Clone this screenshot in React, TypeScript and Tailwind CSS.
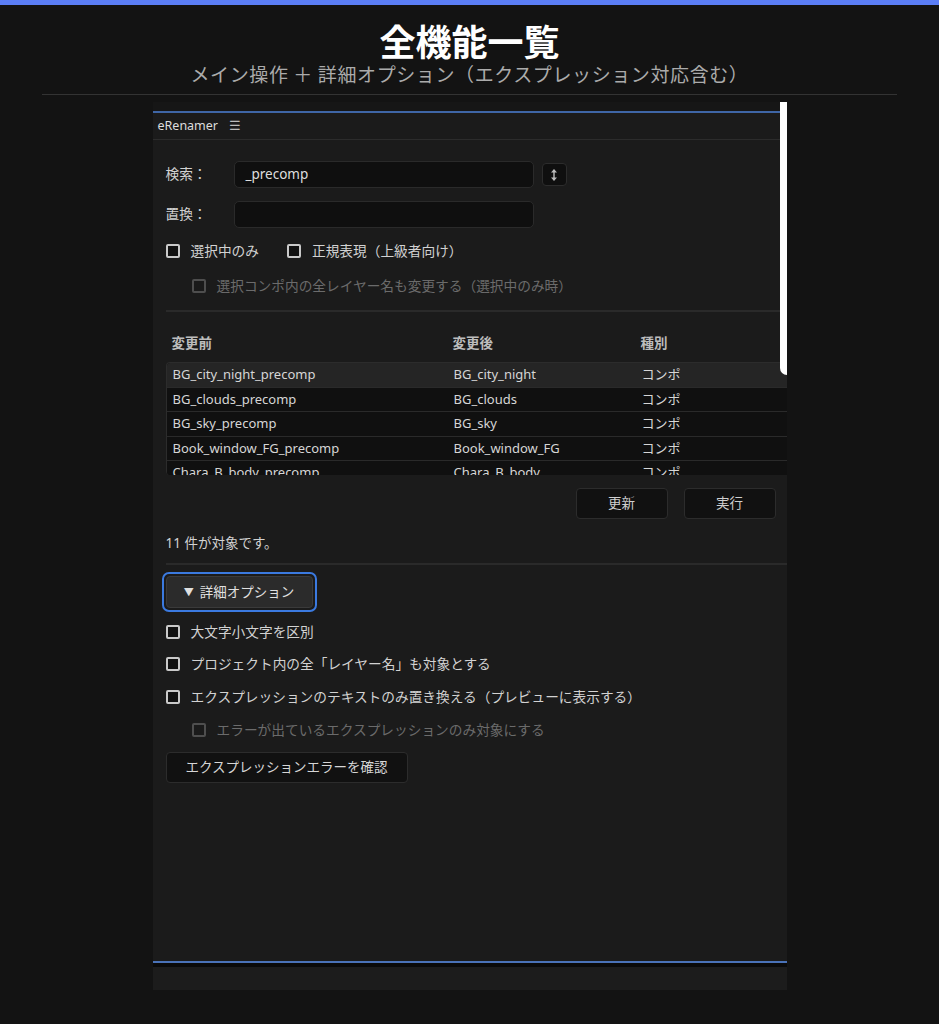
import React from "react";

const font = { fontFamily: '"Noto Sans", "Noto Sans CJK JP", sans-serif' };

function Box({ disabled }: { disabled?: boolean }) {
  return (
    <span
      className={
        "inline-block w-[14px] h-[14px] rounded-[2px] border-2 shrink-0 " +
        (disabled ? "border-[#4e4e4e] bg-[#1a1a1a]" : "border-[#c9c9c9] bg-[#111111]")
      }
    />
  );
}

function Check({ label, disabled, className }: { label: string; disabled?: boolean; className?: string }) {
  return (
    <div className={"flex items-center h-[20px] " + (className ?? "")}>
      <Box disabled={disabled} />
      <span className={"ml-[11px] text-[13.7px] " + (disabled ? "text-[#6b6b6b]" : "text-[#d2d2d2]")}>{label}</span>
    </div>
  );
}

const rows = [
  ["BG_city_night_precomp", "BG_city_night", "コンポ"],
  ["BG_clouds_precomp", "BG_clouds", "コンポ"],
  ["BG_sky_precomp", "BG_sky", "コンポ"],
  ["Book_window_FG_precomp", "Book_window_FG", "コンポ"],
  ["Chara_B_body_precomp", "Chara_B_body", "コンポ"],
];

export default function App() {
  return (
    <div className="min-h-[1024px] bg-[#131313] flex flex-col" style={font}>
      <div className="h-[5px] bg-[#5b7ef6]" />
      <div className="mt-[16px] h-[38px] leading-[38px] text-center text-white text-[36px] font-bold" style={{ fontFamily: '"Noto Sans CJK JP", sans-serif' }}>
        全機能一覧
      </div>
      <div className="mt-[3px] h-[24px] leading-[24px] text-center text-[#ababab] text-[19px] tracking-[0.6px]" style={{ fontFamily: '"Noto Sans CJK JP", sans-serif' }}>
        メイン操作 ＋ 詳細オプション（エクスプレッション対応含む）
      </div>
      <div className="mt-[8px] mx-auto w-[855px] h-px bg-[#333333]" />

      <div className="relative mt-[7px] mx-auto w-[634px] h-[888px] bg-[#1b1b1b] flex flex-col overflow-hidden">
        <div className="h-[9px] bg-[#161616]" />
        <div className="h-[2px] bg-[#3f66a6]" />
        <div className="h-[27px] flex items-center px-[5px] border-b border-[#2c2c2c]">
          <span className="text-[12.5px] text-[#dddddd]">eRenamer</span>
          <span className="ml-[11px] text-[13px] text-[#bbbbbb]">☰</span>
        </div>

        <div className="flex-1 flex flex-col pl-[13px] pt-[21px]">
          <div className="flex items-center h-[27px]">
            <span className="w-[68px] text-[13.7px] text-[#d2d2d2]">検索：</span>
            <div className="w-[300px] h-[27px] rounded-[5px] bg-[#0f0f0f] border border-[#2a2a2a] flex items-center pl-[11px] text-[13.5px] text-[#dedede]">
              _precomp
            </div>
            <div className="ml-[8px] w-[25px] h-[23px] rounded-[4px] bg-[#0f0f0f] border border-[#2c2c2c] flex items-center justify-center">
              <svg width="8" height="12" viewBox="0 0 8 12" fill="#bdbdbd">
                <path d="M4 0 L7 3.5 H1 Z" />
                <rect x="3.3" y="3" width="1.4" height="6" />
                <path d="M4 12 L7 8.5 H1 Z" />
              </svg>
            </div>
          </div>
          <div className="flex items-center h-[27px] mt-[13px]">
            <span className="w-[68px] text-[13.7px] text-[#d2d2d2]">置換：</span>
            <div className="w-[300px] h-[27px] rounded-[5px] bg-[#0f0f0f] border border-[#2a2a2a]" />
          </div>
          <div className="flex items-center mt-[13px]">
            <Check label="選択中のみ" />
            <Check label="正規表現（上級者向け）" className="ml-[28px]" />
          </div>
          <Check label="選択コンポ内の全レイヤー名も変更する（選択中のみ時）" disabled className="mt-[15px] pl-[26px]" />
          <div className="mt-[14px] h-[2px] bg-[#2a2a2a]" />

          <div className="h-[50px] pt-[12px] flex items-center text-[13.5px] font-bold text-[#bdbdbd]">
            <span className="w-[287px] pl-[6px]">変更前</span>
            <span className="w-[188px]">変更後</span>
            <span>種別</span>
          </div>
          <div className="h-[113px] overflow-hidden border-l border-t border-[#2c2c2c] rounded-tl-[4px] rounded-bl-[4px] bg-[#101010]">
            {rows.map((r, i) => (
              <div
                key={i}
                className={
                  "h-[24.5px] flex items-center border-b border-[#2a2a2a] text-[13px] text-[#d6d6d6] " +
                  (i === 0 ? "bg-[#252525]" : "bg-[#101010]")
                }
              >
                <span className="w-[287px] pl-[6px]">{r[0]}</span>
                <span className="w-[188px]">{r[1]}</span>
                <span>{r[2]}</span>
              </div>
            ))}
          </div>

          <div className="mt-[13px] flex justify-end gap-[16px] pr-[11px]">
            <button className="w-[92px] h-[31px] rounded-[4px] bg-[#111111] border border-[#2c2c2c] text-[13.5px] text-[#cfcfcf]">更新</button>
            <button className="w-[92px] h-[31px] rounded-[4px] bg-[#111111] border border-[#2c2c2c] text-[13.5px] text-[#cfcfcf]">実行</button>
          </div>
          <div className="mt-[14px] h-[20px] flex items-center text-[13.5px] text-[#d2d2d2]">11 件が対象です。</div>
          <div className="mt-[10px] h-[2px] bg-[#2a2a2a]" />

          <div className="mt-[7px] -ml-[4px] w-[155px] h-[40px] rounded-[7px] border-2 border-[#3b7ae0] p-[2px]">
            <button className="w-full h-full rounded-[4px] bg-[#2b2b2b] border border-[#3a3a3a] text-[13.5px] text-[#e0e0e0] flex items-center justify-center">
              <span className="text-[10px] mr-[6px]">▼</span>詳細オプション
            </button>
          </div>

          <Check label="大文字小文字を区別" className="mt-[10px]" />
          <Check label="プロジェクト内の全「レイヤー名」も対象とする" className="mt-[12px]" />
          <Check label="エクスプレッションのテキストのみ置き換える（プレビューに表示する）" className="mt-[13px]" />
          <Check label="エラーが出ているエクスプレッションのみ対象にする" disabled className="mt-[13px] pl-[26px]" />
          <button className="mt-[12px] w-[242px] h-[31px] rounded-[4px] bg-[#111111] border border-[#2c2c2c] text-[13.5px] text-[#d6d6d6]">
            エクスプレッションエラーを確認
          </button>
        </div>

        <div className="h-[2px] bg-[#4a72b8]" />
        <div className="h-[4px] bg-[#0a0a0a]" />
        <div className="h-[23px] bg-[#1c1c1c]" />

        <div className="absolute right-0 top-0 w-[7px] h-[273px] bg-white rounded-bl-[8px]" />
      </div>
    </div>
  );
}
